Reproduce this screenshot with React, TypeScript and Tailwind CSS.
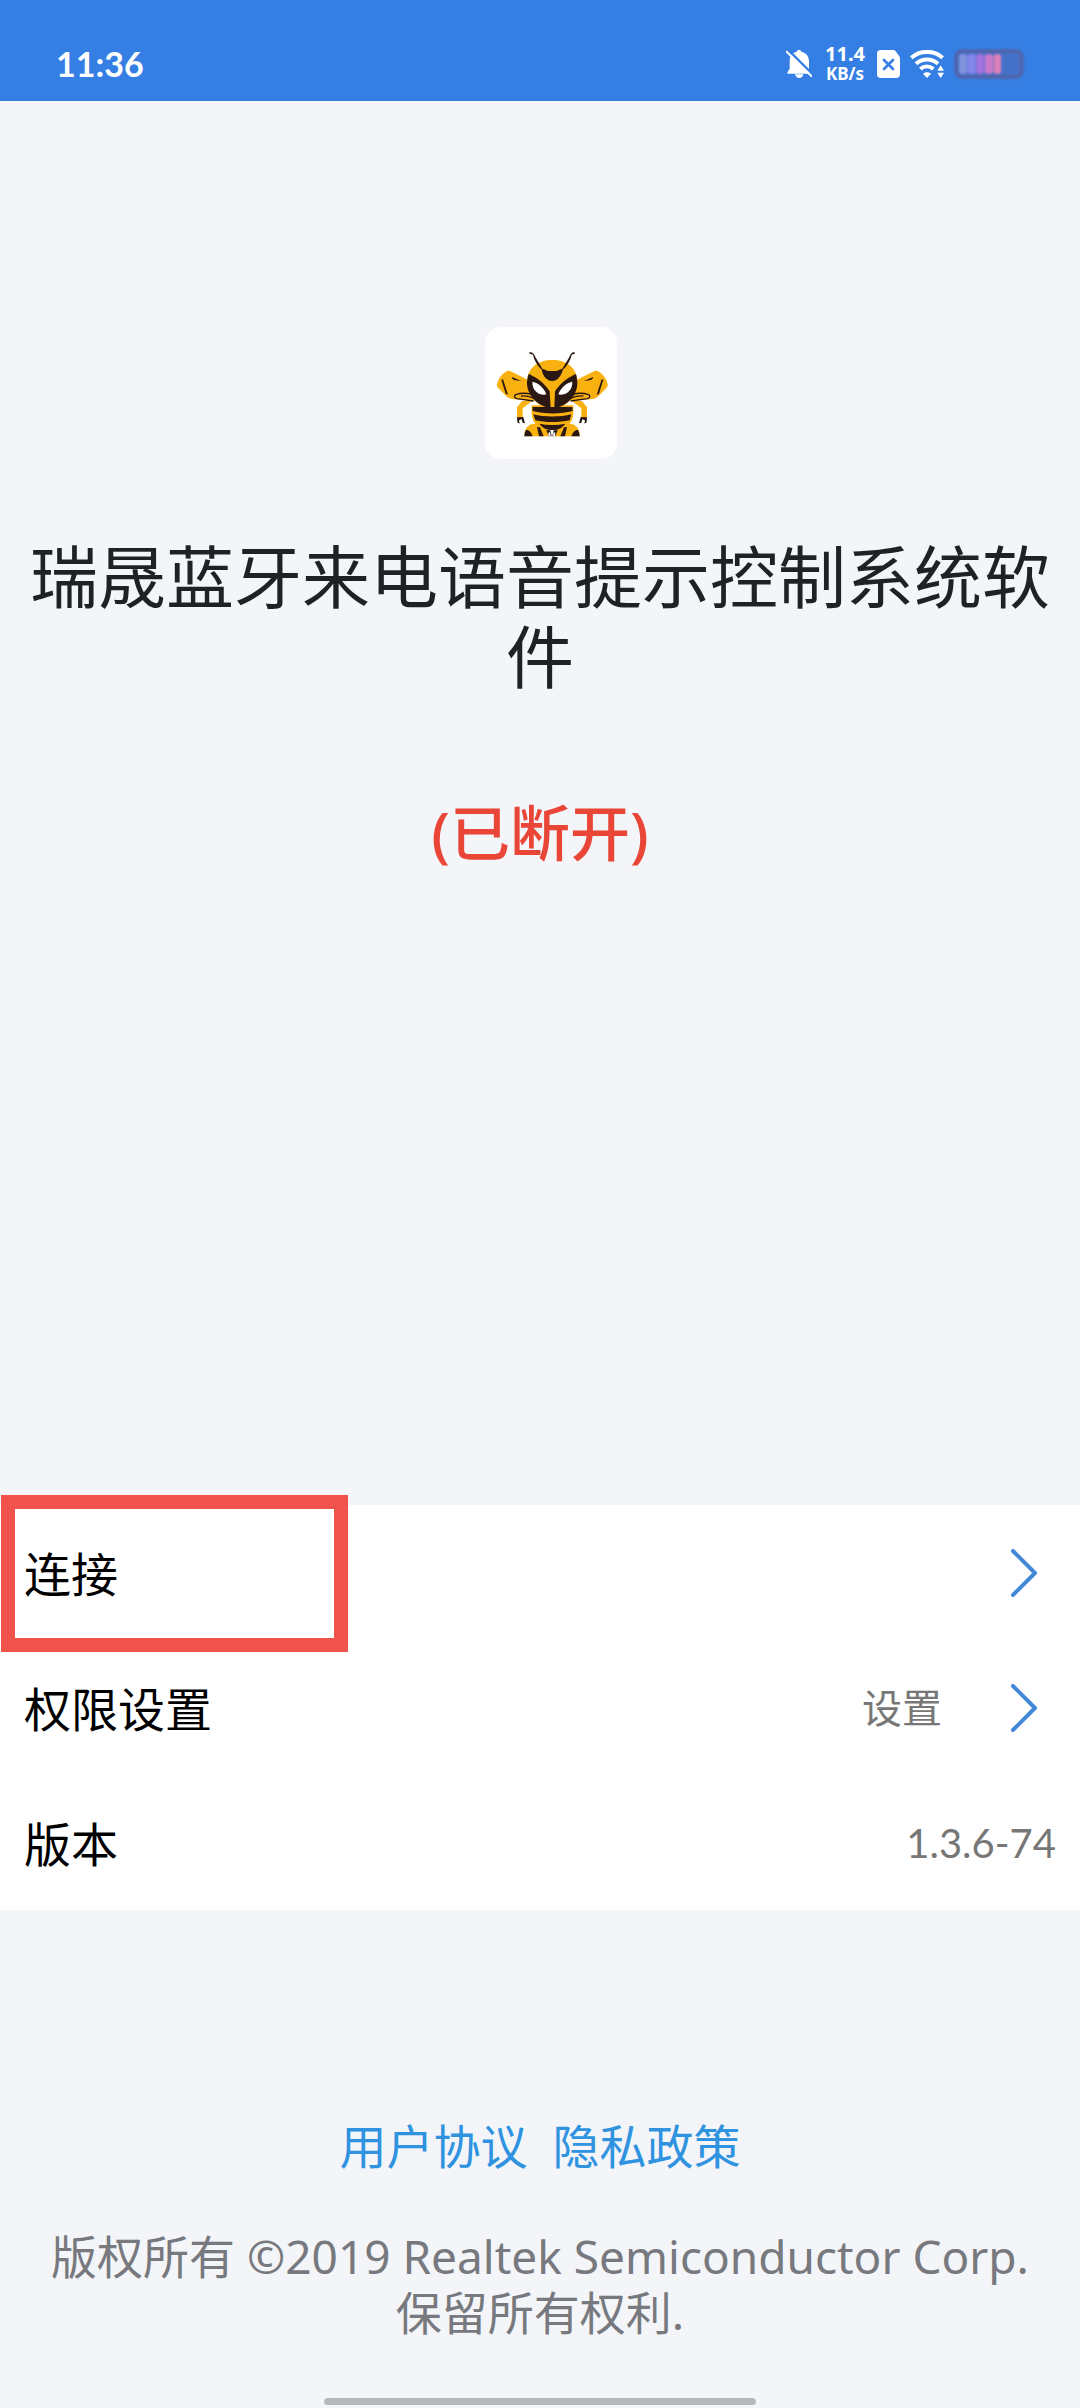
import type { ReactNode } from "react";

function BellOffIcon() {
  return (
    <svg className="h-[30px] w-[26px]" viewBox="0 0 78 90" aria-hidden="true">
      <path
        d="M39 3c4 0 6 2 7 5 15 3 23 14 23 29v24l5 8c1 3 0 5-3 5H8c-4 0-5-3-3-6l6-9V37C11 22 19 11 32 8c1-3 3-5 7-5Z"
        fill="#fff"
      />
      <path d="M27 76h25c-1 7-6 11-12 11s-12-4-13-11Z" fill="#fff" />
      <path d="M6 2 80 76" stroke="#357fe4" strokeWidth="7" />
      <path d="M2 8 76 81" stroke="#fff" strokeWidth="6" strokeLinecap="round" />
    </svg>
  );
}

function SimIcon() {
  return (
    <svg className="h-[28px] w-[23px]" viewBox="0 0 69 84" aria-hidden="true">
      <path d="M11 0h37c4 0 6 1 8 4l10 13c2 3 3 5 3 9v47c0 7-4 11-11 11H11C4 84 0 80 0 73V11C0 4 4 0 11 0Z" fill="#fff" />
      <path d="m21 30 27 27M48 30 21 57" stroke="#357fe4" strokeWidth="8" strokeLinecap="round" />
    </svg>
  );
}

function WifiIcon() {
  return (
    <svg className="h-[28px] w-[34px]" viewBox="0 0 102 84" aria-hidden="true">
      <g fill="none" stroke="#fff" strokeWidth="12">
        <path d="M4 23c27-23 67-23 94 0" />
        <path d="M18 41c19-17 47-17 66 0" />
        <path d="M31 57c12-10 27-10 39 0" />
      </g>
      <path d="M39 71c7-6 17-6 24 0L51 84Z" fill="#fff" />
      <path d="m92 42 13 20H79Z" fill="#357fe4" />
      <path d="m92 46 10 16H82Z" fill="#fff" />
      <path d="m92 84 10-16H82Z" fill="#fff" />
    </svg>
  );
}

function BatteryIcon() {
  return (
    <svg className="h-[30px] w-[70px] blur-[1px]" viewBox="0 0 210 90" aria-hidden="true">
      <rect x="6" y="6" width="198" height="78" rx="17" fill="#4570c8" stroke="#5263a8" strokeWidth="10" />
      <g>
        <rect x="15" y="15" width="24" height="60" rx="9" fill="#7f93dc" />
        <rect x="41" y="15" width="24" height="60" rx="9" fill="#8586ec" />
        <rect x="67" y="15" width="24" height="60" rx="9" fill="#a373dd" />
        <rect x="93" y="15" width="24" height="60" rx="9" fill="#c97ac9" />
        <rect x="119" y="15" width="22" height="60" rx="9" fill="#dd7fb8" />
      </g>
    </svg>
  );
}

function BeeLogo() {
  return (
    <svg className="h-full w-full" viewBox="15 21 396 396" role="img" aria-label="Bee logo">
      <g fill="#f9b110">
        <path d="M152 184 92 154c-5-2-11-2-15 1-14 9-23 22-26 37-1 4 0 8 3 11l25 26c6 6 14 8 24 9l66 4Z" />
        <path d="m282 184 60-30c5-2 11-2 15 1 14 9 23 22 26 37 1 4 0 8-3 11l-25 26c-6 6-14 8-24 9l-66 4Z" />
        <path d="m126 243 34-3-32 25v28h-17v-31Z" />
        <path d="m306 243-34-3 32 25v28h17v-31Z" />
        <path d="M155 256h125v22c0 35-27 52-63 52s-62-17-62-52Z" />
        <path d="M133 349c-1-25 15-40 38-37 23 2 34 17 36 37Z" />
        <path d="M299 349c1-25-15-40-38-37-23 2-34 17-36 37Z" />
        <path d="M217 120c43 0 75 23 75 67 0 34-23 75-75 77-52-2-76-43-76-77 0-44 33-67 76-67Z" />
      </g>
      <g fill="#2b1812">
        <path d="M96 171c8 5 19 7 28 12l-22-3-6-5Z" />
        <path d="M339 171c-8 5-19 7-28 12l22-3 6-5Z" />
        <path d="m64 179 5-1 15 46-7-3Z" />
        <path d="m370 179-5-1-15 46 7-3Z" />
        <path d="m111 292 19-1 5 19-7-2-3-10-8 3 2 10-7-4Z" />
        <path d="m321 292-19-1-5 19 7-2 3-10 8 3-2 10 7-4Z" />
        <path d="M157 261h120l1 12c-34 10-85 10-120 0Z" />
        <path d="M160 283c32 9 82 9 114 0l-5 18c-31 7-74 7-103 0Z" />
        <path d="M178 311c25 5 53 5 78 0-11 15-23 19-39 19s-29-5-39-19Z" />
        <path d="M133 349c0-9 3-17 6-20 7 1 15 7 19 20Z" />
        <path d="M299 349c0-9-3-17-6-20-7 1-15 7-19 20Z" />
        <path d="m171 321 9 1 11 27h-14Z" />
        <path d="m261 321-9 1-11 27h14Z" />
        <path d="m199 330 12 1 4 18h-9Z" />
        <path d="m233 330-12 1-4 18h9Z" />
        <path d="m184 145 20 8h25l21-8c-5 20-15 38-34 38s-29-19-32-38Z" />
        <path d="M146 162c18 7 45 24 63 52l3 50c-33-3-72-33-71-77 1-10 2-17 5-25Z" />
        <path d="M288 162c-18 7-45 24-63 52l-2 50c32-3 70-33 69-77-1-10-2-17-4-25Z" />
        <path d="M148 97c9-2 15 5 18 14l20 34-3 3c-12-13-20-27-24-43-2-3-6-3-10-3Z" />
        <path d="M284 97c-8-2-13 5-16 14l-20 34 3 3c12-13 20-27 24-43 2-3 5-3 9-3Z" />
      </g>
      <g fill="none" stroke="#2b1812" strokeWidth="4" strokeLinejoin="round">
        <path d="M155 223c-18-5-33-4-48 1-6 4-4 10 4 12l50 7" />
        <path d="M123 228c16-1 27 2 39 7" />
        <path d="M278 223c18-5 33-4 48 1 6 4 4 10-4 12l-50 7" />
        <path d="M310 228c-16-1-27 2-39 7" />
      </g>
      <g fill="#fff">
        <path d="M157 185c15 3 33 14 42 38-17 5-43-8-42-38Z" />
        <path d="M277 185c-15 3-33 14-42 38 17 5 43-8 42-38Z" />
        <path d="m205 339 5-3 2 13h-6Z" />
        <path d="m226 339-5-3-2 13h6Z" />
      </g>
    </svg>
  );
}

function Chevron() {
  return (
    <svg className="mr-[18px] h-12 w-7" viewBox="0 0 28 48" fill="none" aria-hidden="true">
      <path d="m3 2 22 22L3 46" stroke="#4489d8" strokeWidth="4" strokeLinecap="round" strokeLinejoin="round" />
    </svg>
  );
}

function Row({ label, children }: { label: string; children?: ReactNode }) {
  return (
    <button type="button" className="flex h-[135px] w-full items-center justify-between px-6 text-left">
      <span className="pt-1 text-[47px] text-black">{label}</span>
      <span className="flex items-center gap-[68px]">
        {children && <span className="text-[40px] text-[#777]">{children}</span>}
        <Chevron />
      </span>
    </button>
  );
}

export default function App() {
  return (
    <div className="relative flex min-h-screen flex-col bg-[#f3f5f9] font-['Noto_Sans','Noto_Sans_CJK_SC',sans-serif]">
      <header className="flex h-[101px] items-center justify-between bg-[#357fe4] pt-[26px] pr-14 pl-14 text-white">
        <time className="font-['Lato',sans-serif] text-[34px] leading-none font-bold">11:36</time>
        <div className="flex items-center">
          <BellOffIcon />
          <div className="mr-3 ml-[13px] flex w-10 flex-col items-center font-['Noto_Sans',sans-serif] leading-[20px] font-bold">
            <span className="text-[20px]">11.4</span>
            <span className="text-[17px]">KB/s</span>
          </div>
          <div className="flex items-center gap-[10px]">
            <SimIcon />
            <WifiIcon />
            <BatteryIcon />
          </div>
        </div>
      </header>

      <main>
        <section className="flex h-[1404px] flex-col items-center pt-[226px] text-center">
          <div className="ml-[22px] h-[132px] w-[132px] overflow-hidden rounded-2xl bg-white">
            <BeeLogo />
          </div>
          <h1 className="mt-[78px] px-6 text-[68px] leading-[80px] text-[#1f2126]">瑞晟蓝牙来电语音提示控制系统软件</h1>
          <p className="mt-24 text-[60px] leading-[80px] font-medium text-[#e94637]">(已断开)</p>
        </section>

        <section className="bg-white">
          <div className="relative">
            <Row label="连接" />
            <div className="pointer-events-none absolute -top-[10px] left-px h-[157px] w-[347px] border-[14px] border-[#f0534c]" />
          </div>
          <Row label="权限设置">设置</Row>
          <div className="flex h-[135px] items-center justify-between px-6">
            <span className="pt-1 text-[47px] text-black">版本</span>
            <span className="font-['Lato',sans-serif] text-[40px] text-[#777]">1.3.6-74</span>
          </div>
        </section>
      </main>

      <footer className="flex flex-1 flex-col items-center pt-[208px] text-center leading-[56px]">
        <nav className="flex gap-[25px] text-[47px] text-[#2f93e0]">
          <a href="#agreement">用户协议</a>
          <a href="#privacy">隐私政策</a>
        </nav>
        <p className="mt-[54px] px-6 text-[46px] text-[#77797e]">
          版权所有 ©2019 Realtek Semiconductor Corp.
          <br />
          保留所有权利.
        </p>
        <div className="mt-auto mb-[3px] h-[7px] w-2/5 rounded-full bg-[#b7b9bd]" />
      </footer>
    </div>
  );
}
